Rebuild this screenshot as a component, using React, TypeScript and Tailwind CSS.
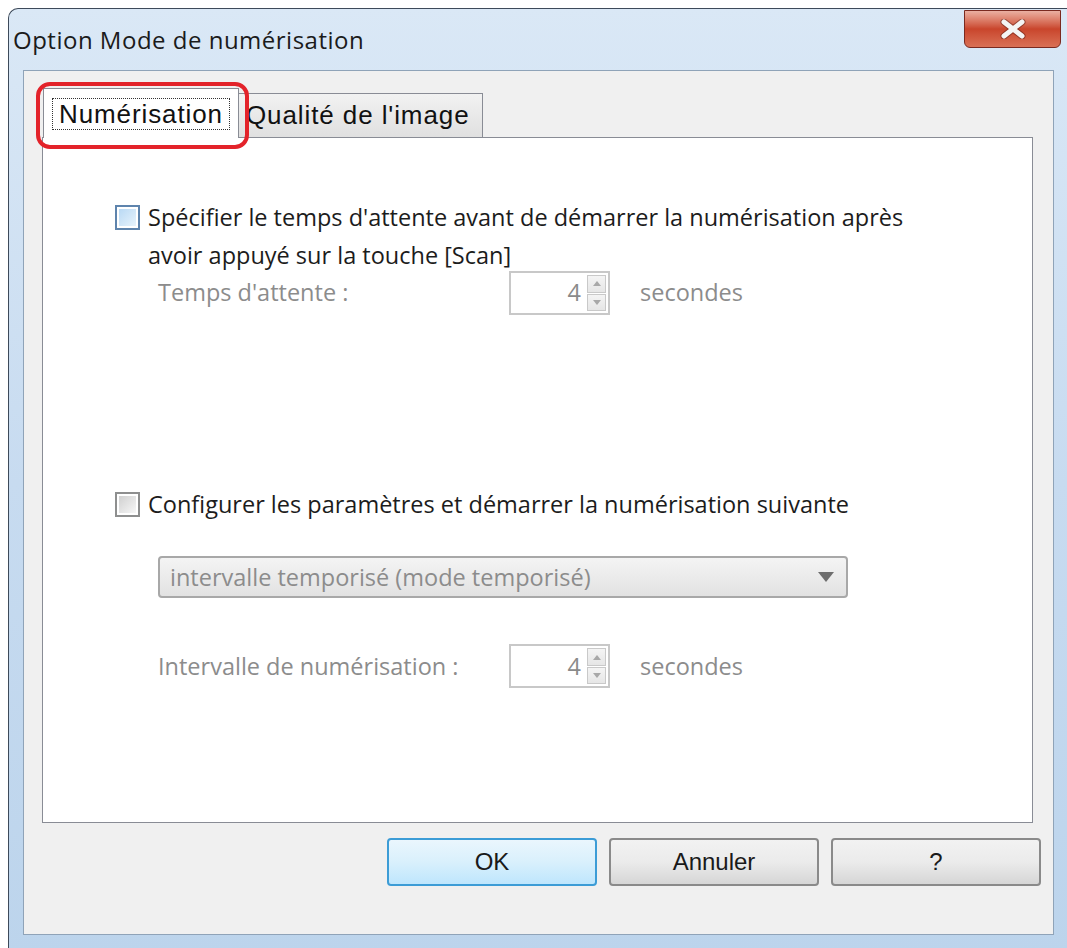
import React from "react";

const body = { fontFamily: "'Open Sans', 'Noto Sans', sans-serif" };
const classic = { fontFamily: "'Liberation Sans', Arial, sans-serif" };

function Checkbox({ focused }: { focused?: boolean }) {
  return (
    <div
      className={`w-[25px] h-[25px] shrink-0 border-2 p-[2px] ${
        focused ? "border-[#5e84ad]" : "border-[#8e8f8f]"
      }`}
    >
      <div
        className={`w-full h-full ${
          focused
            ? "bg-gradient-to-br from-[#b9d9f4] to-[#e7f3fc]"
            : "bg-gradient-to-br from-[#d0d0d0] to-[#f7f7f7]"
        }`}
      />
    </div>
  );
}

function Spinner() {
  return (
    <div className="w-[101px] h-[44px] border-2 border-[#c8c8c8] bg-white flex items-stretch p-[2px]">
      <div className="flex-1 flex items-center justify-end pr-[6px] text-[23.5px] text-[#8a8a8a]" style={body}>
        4
      </div>
      <div className="w-[19px] flex flex-col gap-[1px]">
        <div className="flex-1 border border-[#c9c9c9] bg-gradient-to-b from-[#f4f4f4] to-[#e6e6e6] flex items-center justify-center">
          <svg width="8" height="5" viewBox="0 0 8 5">
            <path d="M0 5 L4 0 L8 5 Z" fill="#a8a8a8" />
          </svg>
        </div>
        <div className="flex-1 border border-[#c9c9c9] bg-gradient-to-b from-[#f4f4f4] to-[#e6e6e6] flex items-center justify-center">
          <svg width="8" height="5" viewBox="0 0 8 5">
            <path d="M0 0 L4 5 L8 0 Z" fill="#a8a8a8" />
          </svg>
        </div>
      </div>
    </div>
  );
}

function DialogButton({ label, isDefault }: { label: string; isDefault?: boolean }) {
  return (
    <div
      className={`w-[210px] h-[48px] rounded-[4px] border-2 flex items-center justify-center text-[24px] text-[#1a1a1a] ${
        isDefault
          ? "border-[#3c9cd6] bg-gradient-to-b from-[#eaf6fd] via-[#d9f0fc] to-[#bee6fd]"
          : "border-[#8a8a8a] bg-gradient-to-b from-[#f2f2f2] via-[#ebebeb] to-[#d6d6d6]"
      }`}
      style={classic}
    >
      {label}
    </div>
  );
}

export default function App() {
  return (
    <div className="w-[1067px] h-[948px] bg-white overflow-hidden">
      <div className="ml-[8px] mt-[8px] w-[1070px] h-[950px] rounded-tl-[10px] border-l border-t border-[#3d4a5a] bg-gradient-to-b from-[#dae8f6] via-[#c7dbf0] to-[#bcd4ec] flex flex-col">
        {/* title bar */}
        <div className="h-[61px] flex items-start">
          <div className="pt-[13px] pl-[4px] text-[24px] tracking-[0.5px] text-[#1b1b1b] flex-1" style={body}>
            Option Mode de numérisation
          </div>
          <div className="mt-[1px] mr-[17px] w-[97px] h-[38px] rounded-b-[6px] border border-[#7a2a20] bg-gradient-to-b from-[#eab0a2] via-[#c9452c] to-[#d97055] flex items-center justify-center">
            <svg width="26" height="20" viewBox="0 0 26 20">
              <path d="M4 3 L22 17 M22 3 L4 17" stroke="#5a1a10" strokeWidth="7" strokeLinecap="round" opacity="0.5" />
              <path d="M4 3 L22 17 M22 3 L4 17" stroke="#f4f4f4" strokeWidth="5" strokeLinecap="round" />
            </svg>
          </div>
        </div>

        {/* client area */}
        <div className="ml-[14px] w-[1031px] h-[865px] border border-[#8fa3b8] bg-[#f0f0f0] relative">
          {/* tabs */}
          <div className="flex items-end pl-[19px] pt-[15px] h-[66px]">
            <div
              className="w-[196px] h-[50px] border-t border-l border-r border-[#898c95] bg-white flex items-center justify-center relative z-10 -mb-[1px]"
              style={classic}
            >
              <div className="border border-dotted border-[#333] px-[6px] py-0 text-[26px] leading-[30px] text-[#111] tracking-[0.9px]">
                Numérisation
              </div>
            </div>
            <div
              className="w-[244px] h-[44px] border-t border-r border-[#898c95] bg-gradient-to-b from-[#f2f2f2] to-[#e0e0e0] flex items-center pl-[7px] text-[26px] text-[#111] tracking-[0.9px]"
              style={classic}
            >
              Qualité de l'image
            </div>
          </div>

          {/* panel */}
          <div className="ml-[18px] w-[991px] h-[686px] border border-[#898c95] bg-white pl-[72px] pt-[66px]" style={body}>
            <div className="flex items-start gap-[8px]">
              <div className="mt-[1px]">
                <Checkbox focused />
              </div>
              <div className="text-[23.5px] leading-[38px] text-[#1c1c1c] -mt-[6px]">
                Spécifier le temps d'attente avant de démarrer la numérisation après
                <br />
                avoir appuyé sur la touche [Scan]
              </div>
            </div>
            <div className="flex items-center -mt-[3px] pl-[43px] text-[23.5px] text-[#8c8c8c]">
              <div className="w-[351px]">Temps d'attente :</div>
              <Spinner />
              <div className="ml-[30px]">secondes</div>
            </div>

            <div className="flex items-center gap-[8px] mt-[172px] text-[23.5px] text-[#1c1c1c]">
              <Checkbox />
              <div>Configurer les paramètres et démarrer la numérisation suivante</div>
            </div>

            <div className="ml-[43px] mt-[34px] w-[690px] h-[42px] rounded-[4px] border-2 border-[#a8a8a8] bg-gradient-to-b from-[#f4f4f4] to-[#e2e2e2] flex items-center justify-between pl-[10px] pr-[12px] text-[23.5px] text-[#8c8c8c]">
              <div>intervalle temporisé (mode temporisé)</div>
              <svg width="16" height="10" viewBox="0 0 16 10">
                <path d="M0 0 L16 0 L8 10 Z" fill="#6e6e6e" />
              </svg>
            </div>

            <div className="flex items-center mt-[46px] pl-[43px] text-[23.5px] text-[#8c8c8c]">
              <div className="w-[351px]">Intervalle de numérisation :</div>
              <Spinner />
              <div className="ml-[30px]">secondes</div>
            </div>
          </div>

          {/* buttons */}
          <div className="flex justify-end gap-[12px] pr-[12px] mt-[15px]">
            <DialogButton label="OK" isDefault />
            <DialogButton label="Annuler" />
            <DialogButton label="?" />
          </div>

          {/* red annotation around selected tab */}
          <div className="absolute left-[12px] top-[11px] w-[213px] h-[67px] rounded-[14px] border-[4px] border-[#e3232a] z-20" />
        </div>
      </div>
    </div>
  );
}
